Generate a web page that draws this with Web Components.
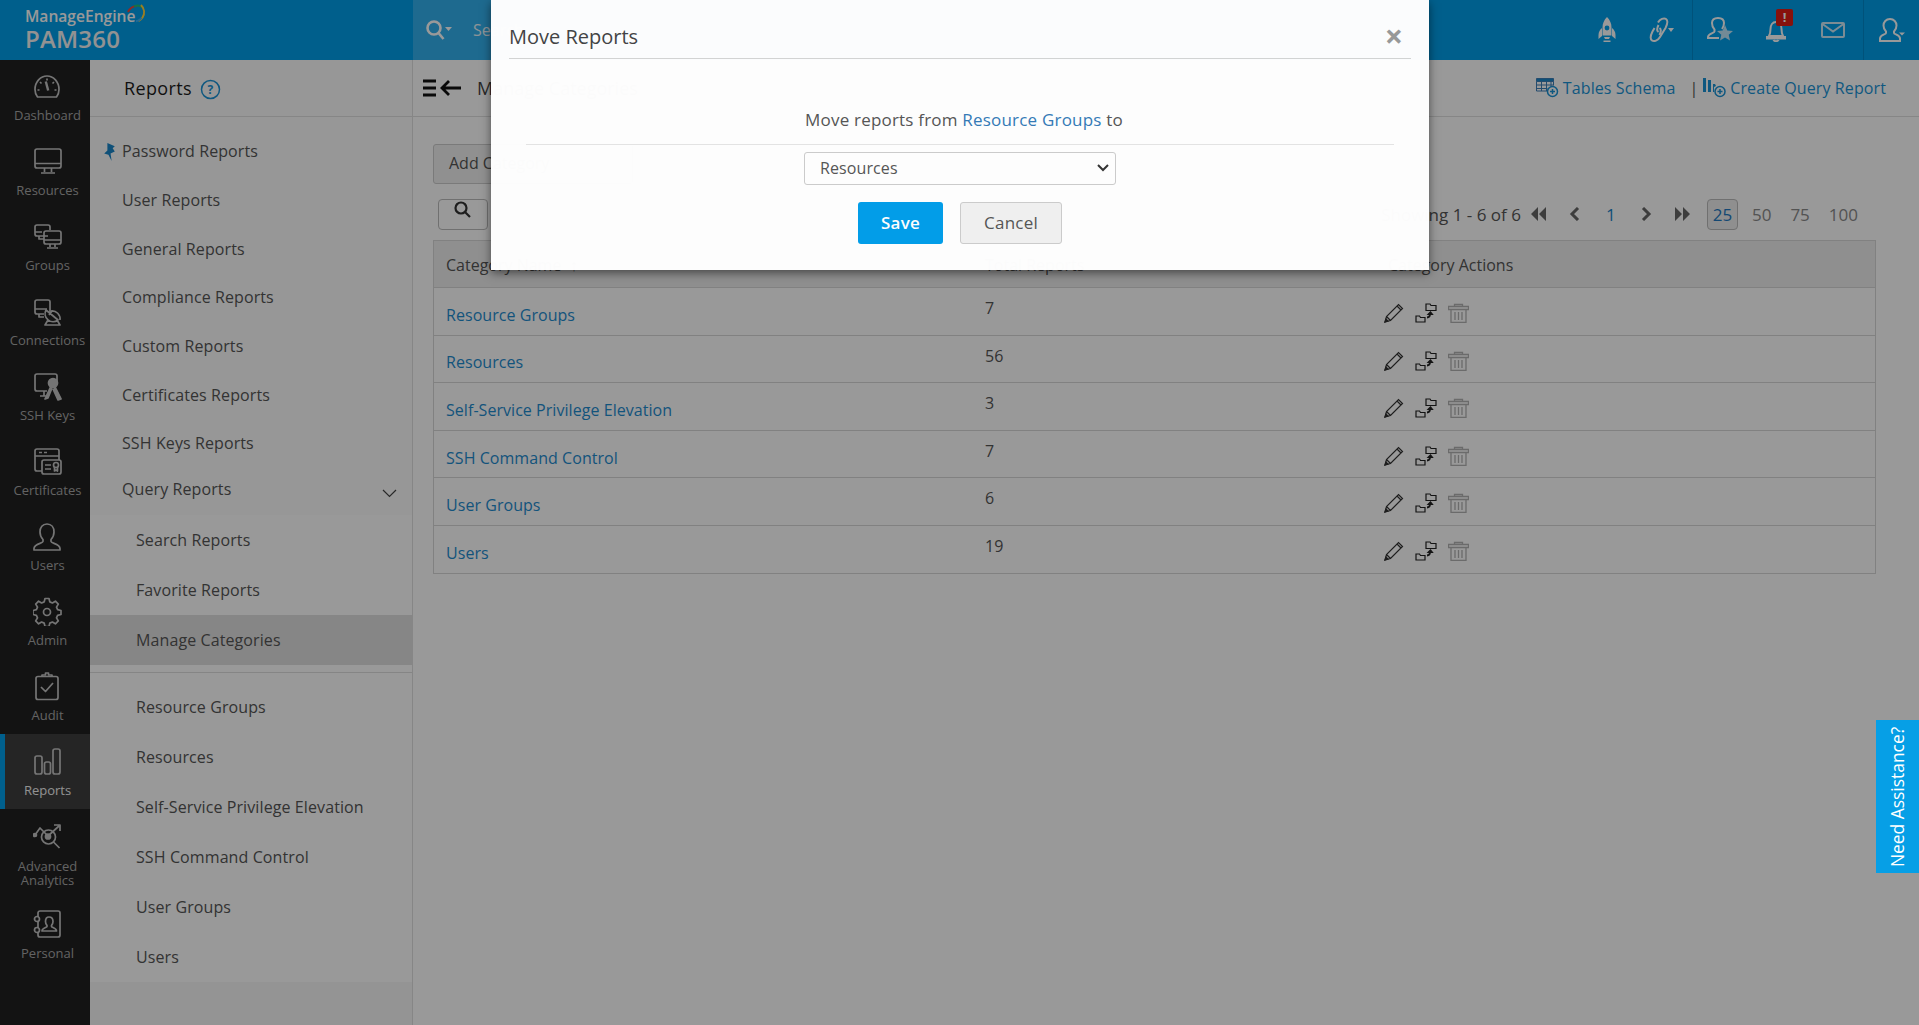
<!DOCTYPE html>
<html lang="en"><head><meta charset="utf-8"><title>PAM360 Reports</title>
<style>
html,body{margin:0;height:100%;overflow:hidden;background:#fff;font-family:"Open Sans","Liberation Sans",sans-serif;color:#555}
</style></head>
<body>
<pam-app></pam-app>
<script>
const I={
dashboard:'<path d="M4.5 25C2.800 22.800 2 20.300 2 17.500 2 10 7.500 4 14 4s12 6 12 13.500c0 2.800-.8 5.300-2.500 7.500z"/><path d="M12.800 9.500l2.400 9" stroke-width="2.400"/><path d="M14 6.500v2M7 10l1.500 1.500M21 10l-1.500 1.500M4.500 18h2M21.500 18h2"/>',
resources:'<rect x="2" y="2" width="26" height="19" rx="2"/><path d="M2 16.500h26M11.500 21v4M18.500 21v4M8 26h14" />',
groups:'<path d="M15 14H4a2 2 0 0 1-2-2V5a2 2 0 0 1 2-2h11a2 2 0 0 1 2 2v3M2 10h7"/><rect x="11" y="9" width="17" height="13" rx="2"/><path d="M11 18h17M17 22v3M22 22v3M14 26h11"/><path d="M6 14v3h5"/>',
connections:'<path d="M17 15V5a2 2 0 0 0-2-2H4a2 2 0 0 0-2 2v10a2 2 0 0 0 2 2h7M2 12h12M6 17v3h5"/><path d="M13 13l12 10a8 8 0 0 1-12-10zM18 14a8 8 0 0 1 9 9M15 23l-3 5h15l-3-5M19 14l-3 4"/>',
ssh:'<path d="M24 11V4a2 2 0 0 0-2-2H4a2 2 0 0 0-2 2v13a2 2 0 0 0 2 2h10M7 24h8M11 19v5"/><circle cx="20" cy="11" r="4.500" fill="currentColor"/><path d="M18 14l-6 13 3-1 4-10M22 15l6 12-3 1-5-11" fill="currentColor"/>',
certs:'<rect x="2" y="2" width="24" height="22" rx="2"/><path d="M2 9h24M6 5.500h3M11 5.500h3"/><rect x="9" y="13" width="19" height="14" rx="2" fill="#222"/><path d="M12 18h6M12 22h6"/><circle cx="23" cy="18" r="2.500"/><path d="M21.500 20v4l1.500-1 1.500 1v-4"/>',
users:'<path d="M14 2c4.500 0 7 3.500 7 8 0 3-1 5.500-3 7.500v2c0 2 9 2 9 7v1.500H1V26.500c0-5 9-5 9-7v-2C8 15.500 7 13 7 10c0-4.500 2.500-8 7-8z"/>',
admin:'<path d="M12 1.500h4l.8 3.400 2.600 1.100 3-1.800 2.900 2.900-1.800 3 1.100 2.600 3.400.8v4l-3.400.8-1.100 2.600 1.800 3-2.900 2.900-3-1.800-2.600 1.100-.8 3.400h-4l-.8-3.400-2.600-1.100-3 1.800-2.900-2.900 1.800-3-1.100-2.600-3.400-.8v-4l3.400-.8 1.100-2.600-1.800-3 2.900-2.900 3 1.800 2.600-1.100z"/><circle cx="14" cy="15" r="3.500"/>',
audit:'<rect x="3" y="4.500" width="22" height="23" rx="2"/><path d="M9 4.500V3h3.500V1h3v2H19v1.500M8 15l4.500 4.500L20 11" />',
reports:'<rect x="2" y="9" width="7" height="18" rx="2"/><rect x="11.500" y="15" width="6" height="12" rx="2"/><rect x="20" y="2" width="7" height="25" rx="2"/>',
analytics:'<circle cx="15.500" cy="14" r="7"/><circle cx="15" cy="13.500" r="2.500" fill="currentColor"/><path d="M20.500 19l6 6M2 12l5-7 8 8 11-10M21 2h6v6"/><circle cx="2" cy="12" r="1.500" fill="currentColor"/>',
personal:'<path d="M5 7V3a2 2 0 0 1 2-2h18a2 2 0 0 1 2 2v22a2 2 0 0 1-2 2H7a2 2 0 0 1-2-2v-3M5 12v6"/><circle cx="4" cy="9" r="2.500"/><circle cx="4" cy="20" r="2.500"/><path d="M16 7c2.500 0 4 2 4 4.500 0 2-.8 3-1.500 4v1c0 1 5 1.500 5 4.500H9c0-3 5-3.500 5-4.500v-1c-.7-1-1.500-2-1.500-4C12.500 9 13.500 7 16 7z"/>'
};
const G={
rocket:'<svg width="18" height="26" viewBox="0 0 18 26" fill="currentColor"><path d="M9 0c3 3 4.500 6.500 4.500 10.500v8h-9v-8C4.500 6.500 6 3 9 0zM4 11v8l-3.500 3v-4c0-3 1.500-5.500 3.500-7zM14 11v8l3.500 3v-4c0-3-1.500-5.500-3.500-7zM6 20h6l-1 2h-4zM5.500 23.500h7V25h-7z"/><circle cx="9" cy="11" r="2.400" fill="#009eea"/></svg>',
link:'<svg width="27" height="26" viewBox="0 0 27 26" fill="none" stroke="currentColor" stroke-width="2"><path d="M11 5.500C13 2 17 .5 19 2s1.500 5-.5 9L13 20c-2 3.500-6 5-8 3.500s-1.500-5 .5-9l2-3.500"/><path d="M11.500 8C10 11 10 14 11.500 15M12.500 18c1.500-3 1.500-6 0-7"/><path d="M21 11h6l-3 4z" fill="currentColor" stroke="none"/></svg>',
star:'<svg width="26" height="26" viewBox="0 0 26 26" fill="none" stroke="currentColor" stroke-width="2"><path d="M15 12c1.500-2 2-4 2-6 0-3-2-5-6-5S5 3 5 6c0 2.500 1 5 2.500 6.500v2C7.500 16 1 16.500 1 20v1h11"/><path d="M18 8l2.300 5.500 5.700.5-4.300 3.800 1.300 5.700-5-3-5 3 1.300-5.700L10 14l5.700-.5z" fill="#c0e6fa" stroke="none"/></svg>',
bell:'<svg width="20" height="24" viewBox="0 0 20 24" fill="none" stroke="currentColor" stroke-width="2"><path d="M3 18c1-2 1.500-4 1.500-7 0-4 2-7 5.500-7s5.500 3 5.500 7c0 3 .5 5 1.500 7zM1 19h18v1.500H1zM7.500 22c.5 1.500 4.500 1.500 5 0"/></svg>',
mail:'<svg width="24" height="16" viewBox="0 0 24 16" fill="none" stroke="#cfeaf7" stroke-width="2"><rect x="1" y="1" width="22" height="14" rx="1"/><path d="M1.500 2L12 9.500 22.500 2"/></svg>',
user:'<svg width="26" height="24" viewBox="0 0 26 24" fill="none" stroke="currentColor" stroke-width="2"><path d="M11 1c4 0 6.500 3 6.500 6.500 0 2.500-1 4.500-2.500 6v1.500c0 1.500 6 1.500 6 5.500V23H1v-2.500c0-4 6-4 6-5.500v-1.500C5.500 12 4.500 10 4.500 7.500 4.500 4 7 1 11 1z"/><path d="M20 14.500h6l-3 3z" fill="currentColor" stroke="none"/></svg>',
tbl:'<svg width="23" height="20" viewBox="0 0 23 20" fill="none" stroke="#3d7fb8" stroke-width="1" style="margin-right:4px"><path d="M.5.500h17v3H.5z" fill="#1a85c8"/><path d="M.5 3.500v9.500H11M.5 7h17M.5 10.500h11M5.500 3.500V13M10.500 3.500V13M15 3.500v5M17.500 3.500v4"/><circle cx="16.500" cy="13.500" r="5" stroke="#1a93d6" stroke-width="1.500" fill="none"/><path d="M16.500 11v5M14 13.500h5" stroke="#1a93d6" stroke-width="1.500"/></svg>',
bars:'<svg width="23" height="20" viewBox="0 0 23 20" fill="#1a93d6" style="margin-right:4px"><rect x="0" y="0" width="3" height="14"/><rect x="5" y="2" width="3" height="12"/><path d="M10 6h2l1 2-2 1v5h-1z"/><circle cx="17" cy="13.500" r="5" fill="none" stroke="#1a93d6" stroke-width="1.500"/><path d="M17 11v5M14.500 13.500h5" stroke="#1a93d6" stroke-width="1.500"/></svg>',
pencil:'<svg width="20" height="20" viewBox="0 0 20 20" fill="none" stroke="#333" stroke-width="1.200"><path d="M1 19l1.500-5.500L14.500 1.500l4 4L6.500 17.500zM2.500 13.500l4 4M13 3l4 4" /><path d="M1 19l1-3 2 2z" fill="#333"/></svg>',
move:'<svg width="22" height="20" viewBox="0 0 22 20" fill="none" stroke="#222" stroke-width="1.200"><path d="M11 1h4l1 1.500h5v5h-10zM1 13h3.500l1 1.500H10V19H1z"/><path d="M12 14.500c2 0 3-1.500 3-3.500" stroke-width="1.800"/><path d="M13 11.500L15.500 9l2 2.500z" fill="#222"/></svg>',
trash:'<svg width="21" height="20" viewBox="0 0 21 20" fill="none" stroke="#b2b2b2" stroke-width="1.300"><path d="M.5 3.500h20v3H.5zM6.500 3.500V1.500h8v2M3 6.500v13h15v-13M7 9v8M10.500 9v8M14 9v8"/></svg>'
};
function def(name,css,html){
  customElements.define(name,class extends HTMLElement{
    connectedCallback(){
      if(this.shadowRoot)return;
      const s=this.attachShadow({mode:'open'});
      const a=n=>this.getAttribute(n)||'';
      s.innerHTML='<style>'+css+'</style>'+(typeof html==='function'?html(a):html);
    }
  });
}
def('rail-item',`:host{display:flex;flex-direction:column;align-items:center;height:75px;box-sizing:border-box;padding:13px 0 0 5px;color:#a6a6a6;font-size:13px;line-height:14px;text-align:center}
:host([first]){height:74px;padding-top:12px}
:host([active]){background:#3e3e3e;box-shadow:inset 5px 0 #009eea;color:#f2f2f2}
:host([tall]){height:88px;padding-top:14px}
svg{width:29px;height:29px;flex:none;margin-bottom:7px;fill:none;stroke:#c4c4c4;stroke-width:1.700;color:#c4c4c4;stroke-linejoin:round}
span{display:block}`,
a=>`<svg viewBox="0 0 29 29">${I[a('icon')]}</svg><span><slot></slot></span>`);
def('pam-rail',`:host{display:block;width:90px;background:#212121;flex:none;font-family:"Open Sans",sans-serif}`,`<slot></slot>`);
def('pam-logo',`:host{display:block;width:413px;flex:none;position:relative;color:#fff;box-sizing:border-box;padding:6px 0 0 25px}
.a{font-size:15.600px;line-height:20px;font-weight:600;display:block}
.b{font-size:24px;line-height:25px;font-weight:600;display:block;letter-spacing:.2px;color:#f4f4f4}
svg{position:absolute;left:125px;top:3px}`,
`<span class="a">ManageEngine</span><span class="b">PAM360</span><svg width="21" height="21" viewBox="0 0 21 21" fill="none" stroke-width="2"><path d="M3 9C5 5 8 3 12 3" stroke="#f0463c"/><path d="M9 3.500c3-1.500 6-1 8 1" stroke="#1fc27a"/><path d="M16 2c3.500 3.500 4 8.500 1.500 12.500-1 1.500-2.500 2.800-4 3.500" stroke="#ffd23c"/><path d="M16.500 15c-1.500 2-3.500 3-5.500 3.300" stroke="#37b3ff"/></svg>`);
def('hdr-btn',`:host{display:flex;align-items:center;justify-content:center;position:relative;color:#fff;flex:none;box-sizing:border-box}
:host([sep])::before{content:"";position:absolute;left:0;top:0;bottom:0;width:1px;background:#0089cb}
b{position:absolute;width:17px;height:17px;border-radius:2px;background:#e11d14;color:#fff;font:700 13px/16px "Open Sans",sans-serif;text-align:center;left:28px;top:9px}`,
a=>`<slot></slot>${a('badge')?`<b>${a('badge')}</b>`:''}`);
def('pam-header',`:host{display:flex;height:60px;background:#009eea;font-family:"Open Sans",sans-serif}
.s{width:600px;flex:none;background:rgba(255,255,255,.2);display:flex;align-items:center;padding-left:12px;gap:21px;color:#e9f6fd;font-size:16px;box-sizing:border-box;height:60px}
.f{flex:1}
.t{display:flex;height:60px}
.t ::slotted(*){height:60px}`,
`<pam-logo></pam-logo><div class="s"><svg width="27" height="22" viewBox="0 0 27 22" fill="none" stroke="#fff" stroke-width="2.600"><circle cx="9" cy="9" r="6.500"/><path d="M13.500 14l5 6"/><path d="M20 8h7l-3.500 4z" fill="#fff" stroke="none"/></svg><span>Search</span></div><div class="f"></div><div class="t"><slot></slot></div>`);
def('report-nav',`:host{display:block;width:322px;flex:none;background:#fcfcfc;border-right:1px solid #e0e0e0;font:16px "Open Sans",sans-serif;letter-spacing:.1px;color:#555;position:relative;box-sizing:content-box}
.h{border-bottom:1px solid #e0e0e0;display:flex;align-items:center;padding-left:34px;gap:8px;color:#1c1c1c;font-size:18px;letter-spacing:.35px;box-sizing:border-box;height:57px}
.h svg{margin-top:2px}
ul{list-style:none;margin:0;padding:0}
.top{padding-top:10px}
.top li{height:48.700px;display:flex;align-items:center;padding-left:32px;position:relative}
.top li.q{height:47px;padding-bottom:4px;box-sizing:border-box}
.pin{position:absolute;left:13px;top:16px}
.ch{position:absolute;left:292px;top:21px}
.sub{background:#fff;padding-bottom:0;height:467px}
.sub li{height:50px;display:flex;align-items:center;padding-left:46px}
.sub li.act{background:#e0e0e0}
.sub hr{border:0;border-top:1px solid #dedede;margin:7px 0 9px}
.rest{background:#f7f7f7;height:43px}`,
`<div class="h"><span>Reports</span><svg width="21" height="21" viewBox="0 0 21 21" fill="none"><circle cx="10.500" cy="10.500" r="9" stroke="#1a93d6" stroke-width="1.500"/><text x="10.500" y="15" text-anchor="middle" font-family="Open Sans" font-weight="700" font-size="12" fill="#1a93d6">?</text></svg></div>
<ul class="top"><li><svg class="pin" width="13" height="18" viewBox="0 0 12 17" fill="#1a85c8"><path d="M4 0l7 3-2 2 2 3-4 2 1 7-3-6-4-1 3-3z"/></svg>Password Reports</li><li>User Reports</li><li>General Reports</li><li>Compliance Reports</li><li>Custom Reports</li><li>Certificates Reports</li><li>SSH Keys Reports</li>
<li class="q">Query Reports<svg class="ch" width="15" height="9" viewBox="0 0 15 9" fill="none" stroke="#444" stroke-width="1.200"><path d="M1 1l6.500 6.500L14 1"/></svg></li></ul>
<ul class="sub"><li>Search Reports</li><li>Favorite Reports</li><li class="act">Manage Categories</li><hr><li>Resource Groups</li><li>Resources</li><li>Self-Service Privilege Elevation</li><li>SSH Command Control</li><li>User Groups</li><li>Users</li></ul><div class="rest"></div>`);
def('tool-bar',`:host{display:flex;height:57px;box-sizing:border-box;border-bottom:1px solid #e0e0e0;align-items:center;padding:0 33px 0 10px;font:18px "Open Sans",sans-serif;color:#333}
.l{display:flex;align-items:center;gap:14px;flex:1;color:#444}
.r{display:flex;align-items:center;font-size:16px;letter-spacing:.1px;color:#1a93d6}
.p{color:#555;margin:0 5px 0 14px}`,
`<div class="l"><svg width="40" height="20" viewBox="0 0 40 20" stroke="#111" stroke-width="2.800" fill="none"><path d="M0 3h13M0 10h13M0 17h13"/><path d="M38 10H19M26 3l-7 7 7 7"/></svg><span>Manage Categories</span></div><div class="r">${G.tbl}<span>Tables Schema</span><span class="p">|</span>${G.bars}<span>Create Query Report</span></div>`);
def('pager-bar',`:host{display:flex;height:46px;box-sizing:border-box;align-items:center;margin-left:5px;font-size:17px;color:#555;padding-right:18px}
.sb{width:50px;height:31px;border:1px solid #bbb;border-radius:4px;box-sizing:border-box;display:flex;justify-content:center;padding-top:0}
.f{flex:1}
.a{display:flex;align-items:center}
.x{display:flex;justify-content:center;width:36px;flex:none}
.n{color:#1a85c8}
.sz{display:flex;align-items:center;color:#8a8a8a;margin-left:6px}
.sz span+span{margin-left:19px}
.sz .on+span{margin-left:14px}
.sz .on{width:31px;height:31px;box-sizing:border-box;border:1px solid #bbb;border-radius:4px;background:#eee;color:#2278c0;line-height:30px;text-align:center;margin-top:1px}`,
`<div class="sb"><svg width="20" height="20" viewBox="0 0 20 20" fill="none" stroke="#333" stroke-width="2.200"><circle cx="8" cy="8" r="5.500"/><path d="M12 12l5 5"/></svg></div><div class="f"></div>
<div class="a"><span>Showing 1 - 6 of 6</span>
<span class="x"><svg width="15" height="14" viewBox="0 0 15 14" fill="#666"><path d="M7 0v14L0 7zM15 0v14L8 7z"/></svg></span>
<span class="x"><svg width="11" height="14" viewBox="0 0 11 14" fill="none" stroke="#666" stroke-width="3"><path d="M9 1L3 7l6 6"/></svg></span>
<span class="x n">1</span>
<span class="x"><svg width="11" height="14" viewBox="0 0 11 14" fill="none" stroke="#666" stroke-width="3"><path d="M2 1l6 6-6 6"/></svg></span>
<span class="x"><svg width="15" height="14" viewBox="0 0 15 14" fill="#666"><path d="M0 0v14l7-7zM8 0v14l7-7z"/></svg></span>
<div class="sz"><span class="on">25</span><span>50</span><span>75</span><span>100</span></div></div>`);
def('cat-row',`:host{display:grid;grid-template-columns:539px 405px 1fr;height:47.600px;box-sizing:border-box;border-bottom:1px solid #d8d8d8;font-size:16px;color:#555;padding-left:12px}
a{color:#1f8ccf;text-decoration:none;align-self:center;padding-top:7px;letter-spacing:.05px}
.c{padding-top:8px;line-height:24px}
.i{display:flex;gap:11px;margin-left:-6px;padding-top:15px;align-items:flex-start}`,
a=>`<a href="#">${a('name')}</a><span class="c">${a('n')}</span><span class="i">${G.pencil}${G.move}${G.trash}</span>`);
def('cat-table',`:host{display:block;border:1px solid #d8d8d8;border-bottom:0;font:16px "Open Sans",sans-serif;color:#555}
.h{display:grid;grid-template-columns:539px 403px 1fr;box-sizing:border-box;padding-top:2px;align-items:center;background:#efefef;padding-left:12px;border-bottom:1px solid #d8d8d8;height:47px}`,
`<div class="h"><span>Category Name &nbsp;↑</span><span>Total Reports</span><span>Category Actions</span></div><slot></slot>`);
def('pam-main',`:host{display:block;flex:1;background:#fff;font-family:"Open Sans",sans-serif;min-width:0}
.b{padding:0 43px 0 20px}
.add{display:inline-flex;align-items:center;height:40px;width:200px;box-sizing:border-box;padding:0 0 2px 15px;border:1px solid #ccc;border-radius:3px;background:#f0f0f0;font-size:16px;color:#555;margin-top:27px}`,
`<tool-bar></tool-bar><div class="b"><div class="add">Add Category</div><pager-bar style="margin-top:7px"></pager-bar><cat-table style="margin-top:3px"><slot></slot></cat-table></div>`);
def('move-dialog',`:host{display:block;position:absolute;left:491px;top:0;width:938px;height:270px;background:#fff;opacity:.985;box-shadow:0 3px 9px rgba(0,0,0,.5);font:17px "Open Sans",sans-serif;letter-spacing:.2px;color:#555;box-sizing:border-box;padding:0 18px;text-align:center;z-index:3}
.t{border-bottom:1px solid #d5d5d5;display:flex;justify-content:space-between;align-items:center;font-size:20px;letter-spacing:0;color:#444;padding-top:14px;box-sizing:border-box;height:59px}
.x{font-size:32px;font-weight:700;color:#9a9a9a;line-height:20px;margin-right:8px}
.m{margin:0 17px;height:86px;box-sizing:border-box;border-bottom:1px solid #e5e5e5;padding:49px 0 0 8px;line-height:24px}
.m a{color:#337ab7;text-decoration:none}
.w{position:relative;width:312px;height:33px;margin:7px auto 0}
select{display:block;appearance:none;-webkit-appearance:none;width:312px;height:33px;padding:0 15px 2px;font:16px "Open Sans",sans-serif;letter-spacing:.1px;color:#555;border:1px solid #ccc;border-radius:3px;background:#fff;box-sizing:border-box}
.w svg{position:absolute;right:7px;top:12px;pointer-events:none}
.b{display:flex;justify-content:center;gap:17px;margin-top:17px}
button{height:42px;border-radius:3px;font:17px "Open Sans",sans-serif;letter-spacing:.2px;box-sizing:border-box;padding:0 0 2px}
.s{width:85px;background:#009eea;border:0;color:#fff;font-weight:600}
.c{width:102px;background:#f1f1f1;border:1px solid #ccc;color:#555}`,
`<div class="t"><span>Move Reports</span><span class="x">×</span></div><div class="m">Move reports from <a href="#">Resource Groups</a> to</div><div class="w"><select><option>Resources</option></select><svg width="12" height="8" viewBox="0 0 12 8" fill="none" stroke="#333" stroke-width="2"><path d="M1 1l5 5 5-5"/></svg></div><div class="b"><button class="s">Save</button><button class="c">Cancel</button></div>`);
def('need-help',`:host{display:block;position:absolute;right:0;top:720px;width:43px;height:153px;background:#069fe6;color:#fff;z-index:3}
span{display:flex;writing-mode:vertical-rl;transform:rotate(180deg);height:100%;width:100%;align-items:center;justify-content:center;font:17.400px/1 "Open Sans",sans-serif}`,
`<span>Need Assistance?</span>`);
def('pam-app',`:host{display:block;width:100%;height:1025px;position:relative;overflow:hidden}
.body{display:flex;height:965px}
.o{position:absolute;inset:0;background:rgba(0,0,0,.4);z-index:2}`,
`<pam-header>
<hdr-btn style="width:44px">${G.rocket}</hdr-btn><hdr-btn style="width:55px;padding-left:8px">${G.link}</hdr-btn>
<hdr-btn sep style="width:56px;margin-left:8px">${G.star}</hdr-btn><hdr-btn badge="!" style="width:56px">${G.bell}</hdr-btn><hdr-btn style="width:57px;margin-right:2px">${G.mail}</hdr-btn>
<hdr-btn sep style="width:56px;padding-left:2px">${G.user}</hdr-btn></pam-header>
<div class="body"><pam-rail>
<rail-item first icon="dashboard">Dashboard</rail-item><rail-item icon="resources">Resources</rail-item><rail-item icon="groups">Groups</rail-item><rail-item icon="connections">Connections</rail-item><rail-item icon="ssh">SSH Keys</rail-item><rail-item icon="certs">Certificates</rail-item><rail-item icon="users">Users</rail-item><rail-item icon="admin">Admin</rail-item><rail-item icon="audit">Audit</rail-item><rail-item active icon="reports">Reports</rail-item><rail-item tall icon="analytics">Advanced Analytics</rail-item><rail-item icon="personal">Personal</rail-item>
</pam-rail><report-nav></report-nav><pam-main>
<cat-row name="Resource Groups" n="7"></cat-row><cat-row name="Resources" n="56"></cat-row><cat-row name="Self-Service Privilege Elevation" n="3"></cat-row><cat-row name="SSH Command Control" n="7"></cat-row><cat-row name="User Groups" n="6"></cat-row><cat-row name="Users" n="19"></cat-row>
</pam-main></div><div class="o"></div><move-dialog></move-dialog><need-help></need-help>`);
</script>
</body></html>
